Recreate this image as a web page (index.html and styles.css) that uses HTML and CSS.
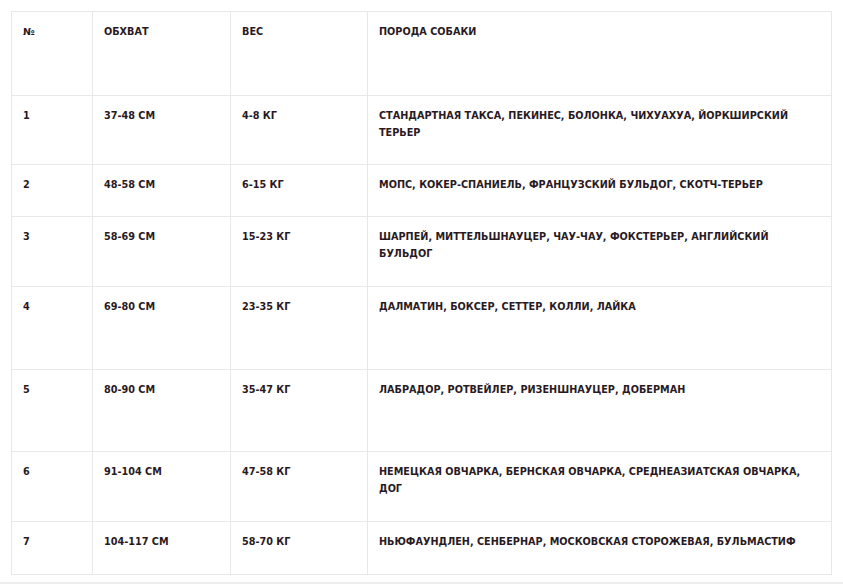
FILE: index.html
```html
<!DOCTYPE html>
<html lang="ru">
<head>
<meta charset="utf-8">
<link rel="stylesheet" href="styles.css">
</head>
<body>
<div class="page">
  <table class="sizes">
    <colgroup>
      <col class="c1"><col class="c2"><col class="c3"><col class="c4">
    </colgroup>
    <tr class="h84"><td>№</td><td>ОБХВАТ</td><td>ВЕС</td><td>ПОРОДА СОБАКИ</td></tr>
    <tr class="h69"><td>1</td><td>37-48 СМ</td><td>4-8 КГ</td><td>СТАНДАРТНАЯ ТАКСА, ПЕКИНЕС, БОЛОНКА, ЧИХУАХУА, ЙОРКШИРСКИЙ ТЕРЬЕР</td></tr>
    <tr class="h52"><td>2</td><td>48-58 СМ</td><td>6-15 КГ</td><td>МОПС, КОКЕР-СПАНИЕЛЬ, ФРАНЦУЗСКИЙ БУЛЬДОГ, СКОТЧ-ТЕРЬЕР</td></tr>
    <tr class="h70"><td>3</td><td>58-69 СМ</td><td>15-23 КГ</td><td>ШАРПЕЙ, МИТТЕЛЬШНАУЦЕР, ЧАУ-ЧАУ, ФОКСТЕРЬЕР, АНГЛИЙСКИЙ БУЛЬДОГ</td></tr>
    <tr class="h83"><td>4</td><td>69-80 СМ</td><td>23-35 КГ</td><td>ДАЛМАТИН, БОКСЕР, СЕТТЕР, КОЛЛИ, ЛАЙКА</td></tr>
    <tr class="h82"><td>5</td><td>80-90 СМ</td><td>35-47 КГ</td><td>ЛАБРАДОР, РОТВЕЙЛЕР, РИЗЕНШНАУЦЕР, ДОБЕРМАН</td></tr>
    <tr class="h70"><td>6</td><td>91-104 СМ</td><td>47-58 КГ</td><td>НЕМЕЦКАЯ ОВЧАРКА, БЕРНСКАЯ ОВЧАРКА, СРЕДНЕАЗИАТСКАЯ ОВЧАРКА, ДОГ</td></tr>
    <tr class="h53"><td>7</td><td>104-117 СМ</td><td>58-70 КГ</td><td>НЬЮФАУНДЛЕН, СЕНБЕРНАР, МОСКОВСКАЯ СТОРОЖЕВАЯ, БУЛЬМАСТИФ</td></tr>
  </table>
  <div class="rule"></div>
</div>
</body>
</html>
```
FILE: styles.css
```css
html, body { margin: 0; padding: 0; background: #fff; }
.page { padding: 11px 0 0 0; }
.sizes {
  margin-left: 11px;
  width: 820px;
  border-collapse: collapse;
  table-layout: fixed;
  font-family: "DejaVu Sans", Verdana, sans-serif;
  font-weight: bold;
  font-size: 9.7px;
  line-height: 17px;
  color: #2a1a1f;
}
.c1 { width: 81px; }
.c2 { width: 138px; }
.c3 { width: 137px; }
.c4 { width: 464px; }
.sizes td {
  border: 1px solid #e8e8e8;
  vertical-align: top;
  padding: 11px 11px 0 11px;
  box-sizing: border-box;
}
.h84 { height: 84px; }
.h69 { height: 69px; }
.h52 { height: 52px; }
.h70 { height: 70px; }
.h83 { height: 83px; }
.h82 { height: 82px; }
.h53 { height: 53px; }
.rule { margin-top: 7px; border-top: 2px solid #ececec; }
```
